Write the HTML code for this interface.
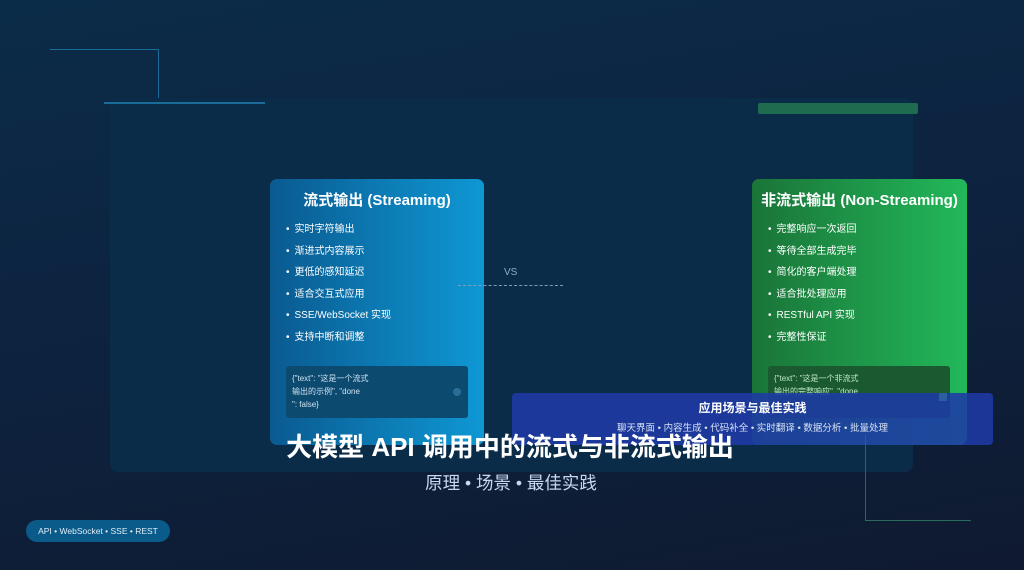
<!DOCTYPE html>
<html><head><meta charset="utf-8"><style>
*{margin:0;padding:0;box-sizing:border-box}
body{width:1024px;height:570px;overflow:hidden;position:relative;font-family:"Liberation Sans","Noto Sans CJK SC",sans-serif;background:linear-gradient(170deg,#0b2c48 0%,#0d2340 45%,#0f1a30 100%);color:#fff}
.abs{position:absolute}
.panel{left:110px;top:98px;width:803px;height:374px;background:#0b2c48;border-radius:8px}
.card{top:179px;width:214px;height:266px;border-radius:7px}
.blue{left:270px;background:linear-gradient(90deg,#0a5a90,#0e98d4)}
.green{left:752px;width:215px;background:linear-gradient(90deg,#1a7438,#22b85a)}
.card h3{font-size:15px;font-weight:bold;text-align:center;margin-top:10px;white-space:nowrap}
.card ul{list-style:none;margin:13px 0 0 16px;font-size:10px}
.card li{height:21.5px;line-height:14px}
.card li:before{content:"•";margin-right:5px}
.code{position:absolute;left:16px;top:187px;width:182px;height:52px;border-radius:3px;font-size:8px;line-height:13px;padding:6px 6px;color:#cfe3f0}
.blue .code{background:#0c4a70}
.green .code{background:#1b5a30;color:#bfe8c8}
.dot{position:absolute;right:7px;top:22px;width:8px;height:8px;border-radius:50%;background:#2a6d98}
</style></head><body>
<div class="abs" style="left:50px;top:49px;width:109px;height:1px;background:#1a6a9a"></div>
<div class="abs" style="left:158px;top:49px;width:1px;height:108px;background:#1a6a9a"></div>
<div class="abs panel"></div>
<div class="abs" style="left:104px;top:102px;width:161px;height:2px;background:#1a6a9a"></div>
<div class="abs" style="left:758px;top:103px;width:160px;height:11px;background:#1e6b50;border-radius:2px"></div>
<div class="abs card blue"><h3>流式输出 (Streaming)</h3>
<ul><li>实时字符输出</li><li>渐进式内容展示</li><li>更低的感知延迟</li><li>适合交互式应用</li><li>SSE/WebSocket 实现</li><li>支持中断和调整</li></ul>
<div class="code">{"text": "这是一个流式<br>输出的示例", "done<br>": false}<div class="dot"></div></div></div>
<div class="abs" style="left:504px;top:267px;font-size:10px;color:#8fb0cc">VS</div>
<div class="abs" style="left:458px;top:285px;width:105px;border-top:1px dashed #7f9cb8"></div>
<div class="abs card green"><h3>非流式输出 (Non-Streaming)</h3>
<ul><li>完整响应一次返回</li><li>等待全部生成完毕</li><li>简化的客户端处理</li><li>适合批处理应用</li><li>RESTful API 实现</li><li>完整性保证</li></ul>
<div class="code">{"text": "这是一个非流式<br>输出的完整响应", "done</div></div>
<div class="abs" style="left:512px;top:393px;width:481px;height:52px;border-radius:4px;background:rgba(30,58,165,0.88)"></div>
<div class="abs" style="left:939px;top:393px;width:8px;height:8px;background:#2a5f9e"></div>
<div class="abs" style="left:512px;top:399px;width:481px;text-align:center;font-size:12px;font-weight:bold">应用场景与最佳实践</div>
<div class="abs" style="left:512px;top:420px;width:481px;text-align:center;font-size:9.5px;color:#d8e2f5">聊天界面 • 内容生成 • 代码补全 • 实时翻译 • 数据分析 • 批量处理</div>
<div class="abs" style="left:865px;top:435px;width:1px;height:86px;background:#2a6a5a"></div>
<div class="abs" style="left:865px;top:520px;width:106px;height:1px;background:#2a6a5a"></div>
<div class="abs" style="left:0;top:427px;width:1020px;text-align:center;font-size:26px;font-weight:bold">大模型 API 调用中的流式与非流式输出</div>
<div class="abs" style="left:0;top:470px;width:1022px;text-align:center;font-size:17.5px;color:#c8d8ee">原理 • 场景 • 最佳实践</div>
<div class="abs" style="left:26px;top:520px;width:144px;height:22px;border-radius:11px;background:#0a5a8a;font-size:8.5px;line-height:22px;text-align:center;color:#e0eef8">API • WebSocket • SSE • REST</div>
</body></html>
